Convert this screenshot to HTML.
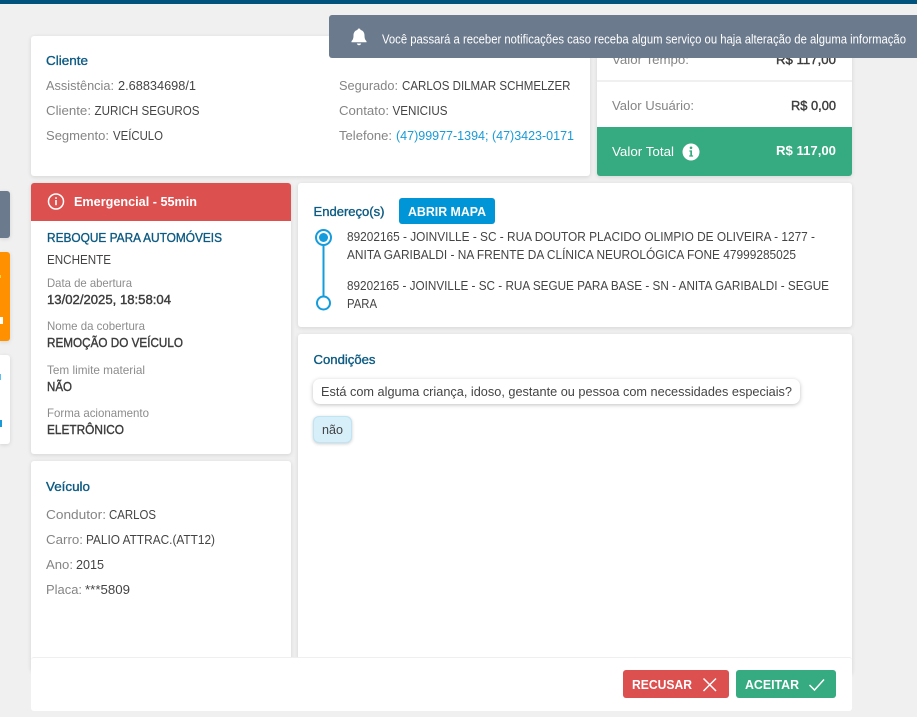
<!DOCTYPE html>
<html lang="pt-BR"><head><meta charset="utf-8"><title>Detalhes</title>
<style>
html,body{margin:0;padding:0}
body{width:917px;height:717px;overflow:hidden;background:#f0f0f0;position:relative;font-family:"Liberation Sans",sans-serif}
.a{position:absolute}
.card{position:absolute;background:#fff;border-radius:3px;box-shadow:0 1px 4px rgba(0,0,0,.12)}
svg{position:absolute;left:0;top:0}
text{font-family:"Liberation Sans",sans-serif;font-size:13px;fill:#444}
.l{fill:#858585}
.t{fill:#0c5a82;stroke:#0c5a82;stroke-width:.35px}
.b{fill:#3d3d3d;stroke:#3d3d3d;stroke-width:.4px}
.s{font-size:12px;fill:#8c8c8c}
.w{fill:#fff}
.wb{fill:#fff;font-weight:bold}
.u{fill:#1a9ad6}
</style></head><body>
<div class="a" style="left:0;top:0;width:917px;height:4px;background:#01527c"></div>
<div class="card" style="left:0;top:191px;width:10px;height:47px;background:#6b7a8d;border-radius:0 3px 3px 0"></div>
<div class="card" style="left:0;top:252px;width:10px;height:89px;background:#ff9100;border-radius:0 3px 3px 0"></div>
<div class="card" style="left:0;top:355px;width:10px;height:89px;border-radius:0 3px 3px 0"></div>
<div class="a" style="left:0;top:275px;width:1px;height:3px;background:#ffd23c"></div>
<div class="a" style="left:0;top:317px;width:3px;height:7px;background:#fff"></div>
<div class="a" style="left:0;top:374px;width:1px;height:6px;background:#5cc0f5"></div>
<div class="a" style="left:0;top:420px;width:2px;height:7px;background:#1a9ad6"></div>
<div class="card" style="left:31px;top:36px;width:559px;height:140px"></div>
<div class="card" style="left:597px;top:30px;width:255px;height:146px"></div>
<div class="a" style="left:597px;top:80px;width:255px;height:2px;background:#f0f0f0"></div>
<div class="a" style="left:597px;top:127px;width:255px;height:49px;background:#36aa80;border-radius:0 0 3px 3px"></div>
<div class="card" style="left:31px;top:183px;width:260px;height:271px"></div>
<div class="a" style="left:31px;top:183px;width:260px;height:38px;background:#dc5050;border-radius:3px 3px 0 0"></div>
<div class="card" style="left:31px;top:461px;width:260px;height:210px"></div>
<div class="card" style="left:298px;top:183px;width:554px;height:144px"></div>
<div class="card" style="left:298px;top:334px;width:554px;height:340px"></div>
<div class="card" style="left:31px;top:657px;width:821px;height:54px;border-top:1px solid #efefef;box-sizing:border-box;box-shadow:none"></div>
<div class="a" style="left:399px;top:198px;width:96px;height:26px;background:#0095d6;border-radius:3px"></div>
<div class="a" style="left:313px;top:379px;width:487px;height:25px;background:#fff;border-radius:7px;box-shadow:0 1px 4px rgba(0,0,0,.25)"></div>
<div class="a" style="left:313px;top:416px;width:39px;height:27px;box-sizing:border-box;background:#d6eff9;border:1px solid #bfe4f3;border-radius:6px;box-shadow:0 1px 3px rgba(0,0,0,.2)"></div>
<div class="a" style="left:623px;top:670px;width:106px;height:28px;background:#dc5050;border-radius:3px"></div>
<div class="a" style="left:736px;top:670px;width:100px;height:28px;background:#36aa80;border-radius:3px"></div>
<svg width="917" height="717" viewBox="0 0 917 717">
<text class="t" x="46" y="65" textLength="42" lengthAdjust="spacingAndGlyphs">Cliente</text>
<text class="l" x="46" y="90" textLength="68" lengthAdjust="spacingAndGlyphs">Assistência:</text><text x="118" y="90" textLength="78" lengthAdjust="spacingAndGlyphs">2.68834698/1</text>
<text class="l" x="46" y="115" textLength="45" lengthAdjust="spacingAndGlyphs">Cliente:</text><text x="94.5" y="115" textLength="105" lengthAdjust="spacingAndGlyphs">ZURICH SEGUROS</text>
<text class="l" x="46" y="140" textLength="63" lengthAdjust="spacingAndGlyphs">Segmento:</text><text x="113" y="140" textLength="50" lengthAdjust="spacingAndGlyphs">VEÍCULO</text>
<text class="l" x="339" y="90" textLength="59" lengthAdjust="spacingAndGlyphs">Segurado:</text><text x="402" y="90" textLength="168.5" lengthAdjust="spacingAndGlyphs">CARLOS DILMAR SCHMELZER</text>
<text class="l" x="339" y="115" textLength="50" lengthAdjust="spacingAndGlyphs">Contato:</text><text x="392.5" y="115" textLength="55" lengthAdjust="spacingAndGlyphs">VENICIUS</text>
<text class="l" x="339" y="140" textLength="53" lengthAdjust="spacingAndGlyphs">Telefone:</text><text class="u" x="396" y="140" textLength="178" lengthAdjust="spacingAndGlyphs">(47)99977-1394; (47)3423-0171</text>
<text class="l" x="612" y="64" textLength="77" lengthAdjust="spacingAndGlyphs">Valor Tempo:</text><text class="b" x="776" y="64" textLength="60" lengthAdjust="spacingAndGlyphs">R$ 117,00</text>
<path d="M329 18a3 3 0 0 1 3-3H917V58H332a3 3 0 0 1-3-3z" fill="#6b7a8d"/>
<text class="l" x="612" y="110" textLength="82" lengthAdjust="spacingAndGlyphs">Valor Usuário:</text><text class="b" x="791" y="110" textLength="45" lengthAdjust="spacingAndGlyphs">R$ 0,00</text>
<text class="w" x="612" y="156" textLength="62" lengthAdjust="spacingAndGlyphs">Valor Total</text><text class="wb" x="776" y="155" textLength="60" lengthAdjust="spacingAndGlyphs">R$ 117,00</text>
<circle cx="691" cy="152" r="8.5" fill="#fff"/><circle cx="691" cy="147.8" r="1.3" fill="#36aa80"/><path d="M689.4 150.4h2.6v5h1.1v1.2h-3.9v-1.2h1.1v-3.8h-.9z" fill="#36aa80"/>
<path d="M359 28.5c-.9 0-1.5.6-1.500 1.400-2.700.7-4 2.900-4 5.600 0 3-.7 4.300-2 5.700v1.100h15v-1.100c-1.300-1.400-2-2.700-2-5.700 0-2.700-1.300-4.900-4-5.600 0-.8-.6-1.400-1.500-1.400zM356.800 43.500c.2 1 1.100 1.700 2.200 1.700s2-.7 2.200-1.700z" fill="#fff"/>
<text class="w" x="382" y="43.5" textLength="524" lengthAdjust="spacingAndGlyphs" style="font-size:12.5px">Você passará a receber notificações caso receba algum serviço ou haja alteração de alguma informação</text>
<circle cx="56" cy="201.5" r="7.5" fill="none" stroke="#fff" stroke-width="1.5"/><rect x="55.2" y="200" width="1.6" height="5.2" fill="#fff"/><rect x="55.2" y="197.2" width="1.6" height="1.7" fill="#fff"/>
<text class="wb" x="74" y="206" textLength="123" lengthAdjust="spacingAndGlyphs">Emergencial - 55min</text>
<text class="t" x="47" y="242" textLength="175" lengthAdjust="spacingAndGlyphs">REBOQUE PARA AUTOMÓVEIS</text>
<text x="47" y="264" textLength="64" lengthAdjust="spacingAndGlyphs">ENCHENTE</text>
<text class="s" x="47" y="287" textLength="85" lengthAdjust="spacingAndGlyphs">Data de abertura</text><text class="b" x="47" y="304" textLength="124" lengthAdjust="spacingAndGlyphs">13/02/2025, 18:58:04</text>
<text class="s" x="47" y="330" textLength="98" lengthAdjust="spacingAndGlyphs">Nome da cobertura</text><text class="b" x="47" y="347" textLength="136" lengthAdjust="spacingAndGlyphs">REMOÇÃO DO VEÍCULO</text>
<text class="s" x="47" y="374" textLength="98" lengthAdjust="spacingAndGlyphs">Tem limite material</text><text class="b" x="47" y="391" textLength="25" lengthAdjust="spacingAndGlyphs">NÃO</text>
<text class="s" x="47" y="417" textLength="102" lengthAdjust="spacingAndGlyphs">Forma acionamento</text><text class="b" x="47" y="434" textLength="77" lengthAdjust="spacingAndGlyphs">ELETRÔNICO</text>
<text class="t" x="46" y="491" textLength="44" lengthAdjust="spacingAndGlyphs">Veículo</text>
<text class="l" x="46" y="519" textLength="60" lengthAdjust="spacingAndGlyphs">Condutor:</text><text x="109" y="519" textLength="47" lengthAdjust="spacingAndGlyphs">CARLOS</text>
<text class="l" x="46" y="544" textLength="37" lengthAdjust="spacingAndGlyphs">Carro:</text><text x="86" y="544" textLength="129" lengthAdjust="spacingAndGlyphs">PALIO ATTRAC.(ATT12)</text>
<text class="l" x="46" y="569" textLength="27" lengthAdjust="spacingAndGlyphs">Ano:</text><text x="76" y="569" textLength="28" lengthAdjust="spacingAndGlyphs">2015</text>
<text class="l" x="46" y="594" textLength="36" lengthAdjust="spacingAndGlyphs">Placa:</text><text x="85" y="594" textLength="45" lengthAdjust="spacingAndGlyphs">***5809</text>
<text class="t" x="313.5" y="216" textLength="71" lengthAdjust="spacingAndGlyphs">Endereço(s)</text>
<text class="wb" x="408" y="216" textLength="78" lengthAdjust="spacingAndGlyphs">ABRIR MAPA</text>
<circle cx="323.5" cy="237.5" r="7.5" fill="#fff" stroke="#159cdc" stroke-width="2"/><circle cx="323.5" cy="237.5" r="4.5" fill="#159cdc"/>
<rect x="322.5" y="245" width="2" height="52" fill="#159cdc"/>
<circle cx="323.5" cy="303" r="6.5" fill="#fff" stroke="#159cdc" stroke-width="2"/>
<text x="347" y="241" textLength="468" lengthAdjust="spacingAndGlyphs">89202165 - JOINVILLE - SC - RUA DOUTOR PLACIDO OLIMPIO DE OLIVEIRA - 1277 -</text>
<text x="347" y="259" textLength="449" lengthAdjust="spacingAndGlyphs">ANITA GARIBALDI - NA FRENTE DA CLÍNICA NEUROLÓGICA FONE 47999285025</text>
<text x="347" y="290" textLength="482" lengthAdjust="spacingAndGlyphs">89202165 - JOINVILLE - SC - RUA SEGUE PARA BASE - SN - ANITA GARIBALDI - SEGUE</text>
<text x="347" y="308" textLength="30" lengthAdjust="spacingAndGlyphs">PARA</text>
<text class="t" x="313.5" y="364" textLength="62" lengthAdjust="spacingAndGlyphs">Condições</text>
<text x="321" y="396" textLength="471" lengthAdjust="spacingAndGlyphs">Está com alguma criança, idoso, gestante ou pessoa com necessidades especiais?</text>
<text x="322" y="434" textLength="21" lengthAdjust="spacingAndGlyphs">não</text>
<text class="wb" x="632" y="689" textLength="60" lengthAdjust="spacingAndGlyphs">RECUSAR</text>
<path d="M703.5 678.5l12.500 12.500M716 678.500l-12.500 12.500" stroke="#fff" stroke-width="1.500" fill="none"/>
<text class="wb" x="745" y="689" textLength="54" lengthAdjust="spacingAndGlyphs">ACEITAR</text>
<path d="M809.5 685l5 5 9.500-10.500" stroke="#fff" stroke-width="1.500" fill="none"/>
</svg>
</body></html>
